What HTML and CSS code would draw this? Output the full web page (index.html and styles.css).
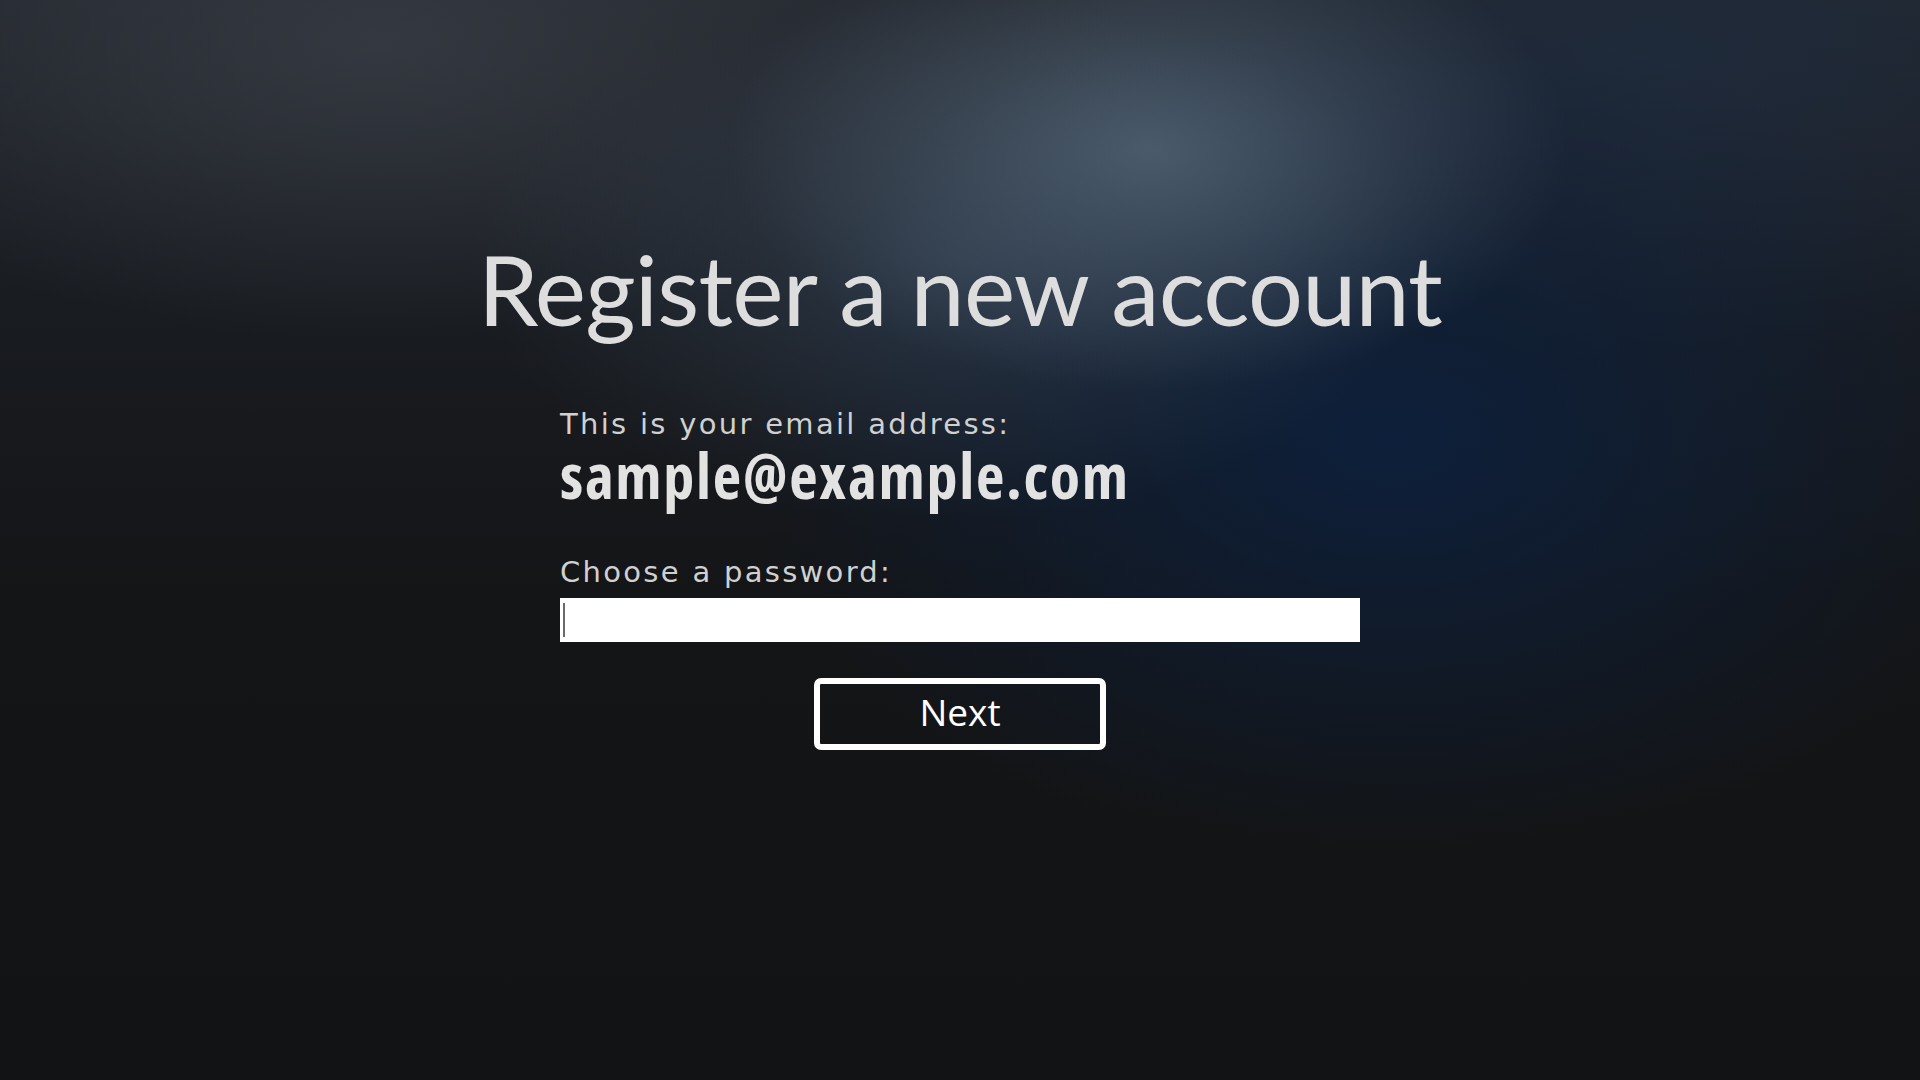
FILE: index.html
```html
<!DOCTYPE html>
<html lang="en">
<head>
<meta charset="utf-8">
<title>Register a new account</title>
<link rel="stylesheet" href="styles.css">
</head>
<body>
<main class="page">
  <h1 class="title">Register a new account</h1>
  <section class="form">
    <p class="label label-email">This is your email address:</p>
    <p class="email">sample@example.com</p>
    <p class="label label-password">Choose a password:</p>
    <div class="input"><span class="caret"></span></div>
  </section>
  <button class="next" type="button">Next</button>
</main>
</body>
</html>
```
FILE: styles.css
```css
html, body {
  margin: 0;
  padding: 0;
  width: 1920px;
  height: 1080px;
  overflow: hidden;
}
body {
  background-color: #121314;
  background-image:
    radial-gradient(ellipse 420px 240px at 1150px 150px, rgba(84,102,120,0.8), rgba(84,102,120,0) 100%),
    radial-gradient(ellipse 480px 260px at 950px 260px, rgba(58,74,94,0.55), rgba(58,74,94,0) 100%),
    radial-gradient(ellipse 650px 420px at 1390px 440px, rgba(12,32,62,0.9), rgba(12,32,62,0) 100%),
    radial-gradient(ellipse 620px 300px at 380px 40px, rgba(54,58,66,0.9), rgba(54,58,66,0) 100%),
    radial-gradient(ellipse 600px 300px at 1650px 60px, rgba(30,42,60,0.9), rgba(30,42,60,0) 100%),
    linear-gradient(180deg, #23272e 0%, #191c21 28%, #141517 55%, #121314 100%);
  color: #dedede;
}
.page {
  display: flex;
  flex-direction: column;
  align-items: center;
  padding-top: 229px;
}
.title {
  margin: 0;
  font-family: Lato, "Open Sans", sans-serif;
  font-weight: 400;
  font-size: 97px;
  letter-spacing: -0.8px;
  line-height: 120px;
  color: #dddddd;
}
.form {
  width: 800px;
  margin-top: 59px;
  display: flex;
  flex-direction: column;
}
.label {
  margin: 0;
  font-family: "DejaVu Sans", Lato, sans-serif;
  font-size: 29px;
  letter-spacing: 2.3px;
  color: #d0d0d0;
}
.label-email {
  line-height: 32px;
}
.email {
  margin: 0;
  font-family: "Open Sans", sans-serif;
  font-weight: 700;
  font-stretch: 75%;
  font-size: 62px;
  letter-spacing: 1.7px;
  line-height: 70px;
  color: #e2e2e2;
}
.label-password {
  margin-top: 44px;
  line-height: 36px;
}
.input {
  margin-top: 8px;
  height: 44px;
  background: #ffffff;
  display: flex;
  align-items: center;
  padding-left: 3px;
}
.caret {
  width: 2px;
  height: 34px;
  background: #6a6a6a;
}
.next {
  margin-top: 36px;
  width: 292px;
  height: 72px;
  box-sizing: border-box;
  border: 6px solid #ffffff;
  border-radius: 7px;
  background: transparent;
  color: #ffffff;
  font-family: "Open Sans", sans-serif;
  font-size: 37px;
  line-height: 1;
  padding: 0 0 6px 0;
  display: flex;
  align-items: center;
  justify-content: center;
}
```
